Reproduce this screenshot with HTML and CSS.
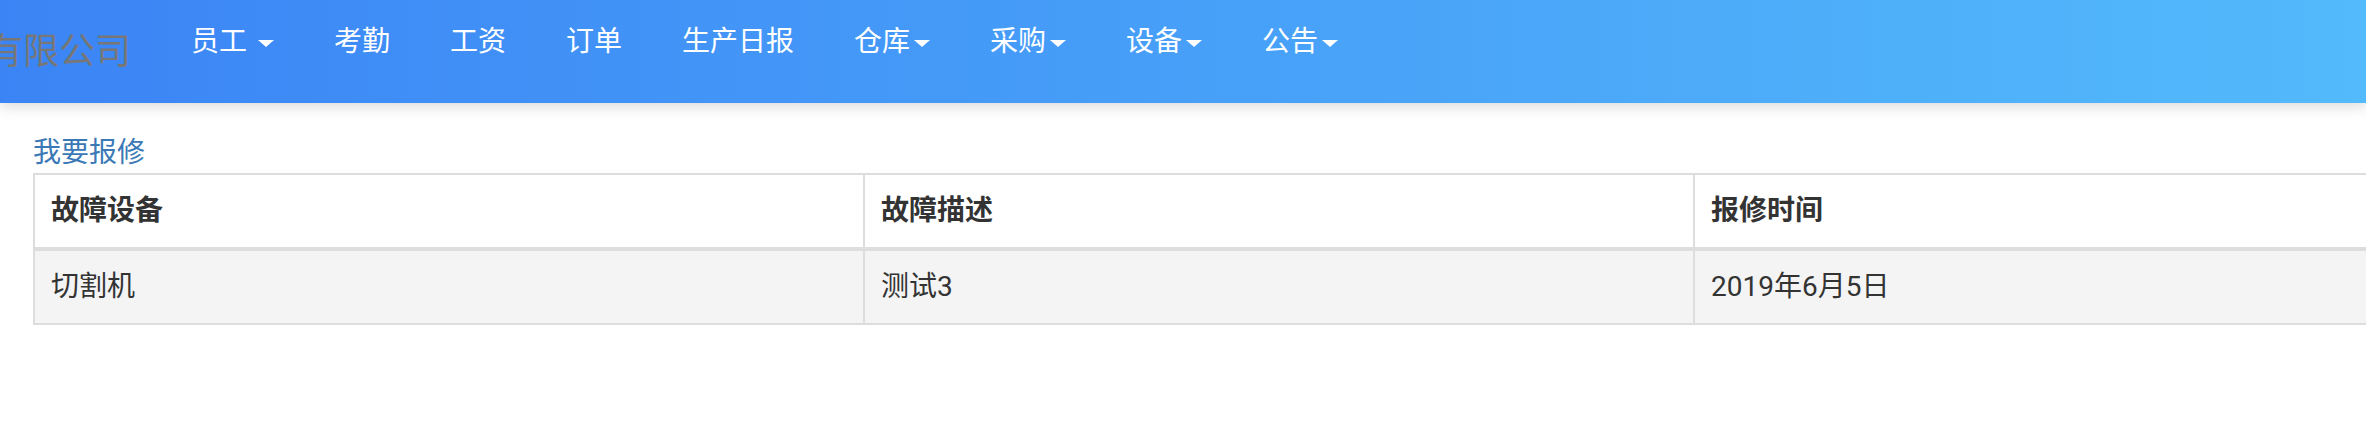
FILE: index.html
```html
<!DOCTYPE html>
<html lang="zh-CN">
<head>
<meta charset="utf-8">
<title>我要报修</title>
<link rel="stylesheet" href="styles.css">
</head>
<body>
<header class="navbar">
  <div class="brand">有限公司</div>
  <ul class="nav">
    <li class="nav-item">员工 <span class="caret"></span></li>
    <li class="nav-item">考勤</li>
    <li class="nav-item">工资</li>
    <li class="nav-item">订单</li>
    <li class="nav-item">生产日报</li>
    <li class="nav-item">仓库<span class="caret"></span></li>
    <li class="nav-item">采购<span class="caret"></span></li>
    <li class="nav-item">设备<span class="caret"></span></li>
    <li class="nav-item">公告<span class="caret"></span></li>
  </ul>
</header>
<main class="content">
  <a class="report-link" href="#">我要报修</a>
  <table class="repair-table">
    <colgroup>
      <col class="col">
      <col class="col">
      <col class="col">
    </colgroup>
    <thead>
      <tr>
        <th>故障设备</th>
        <th>故障描述</th>
        <th>报修时间</th>
      </tr>
    </thead>
    <tbody>
      <tr>
        <td>切割机</td>
        <td>测试3</td>
        <td>2019年6月5日</td>
      </tr>
    </tbody>
  </table>
</main>
</body>
</html>
```

FILE: styles.css
```css
html, body {
  margin: 0;
  padding: 0;
  overflow: hidden;
  background: #fff;
}

body {
  font-family: "Roboto", "Noto Sans CJK SC", sans-serif;
  color: #333;
  width: 2366px;
  height: 434px;
}

.navbar {
  display: flex;
  align-items: flex-start;
  height: 103px;
  background: linear-gradient(to right, #3b84f5, #53bafb);
  box-shadow: 0 3px 14px rgba(0, 0, 0, 0.16);
  position: relative;
  z-index: 1;
}

.brand {
  margin-left: -13px;
  padding-top: 27px;
  font-size: 36px;
  line-height: 50px;
  color: #777;
  white-space: nowrap;
}

.nav {
  display: flex;
  list-style: none;
  margin: 0 0 0 30px;
  padding: 22px 0 0 0;
}

.nav-item {
  padding: 0 30px;
  font-size: 28px;
  line-height: 40px;
  color: #fff;
  white-space: nowrap;
}

.caret {
  display: inline-block;
  width: 0;
  height: 0;
  margin-left: 4px;
  vertical-align: middle;
  border-top: 7px solid #fff;
  border-left: 8px solid transparent;
  border-right: 8px solid transparent;
}

.content {
  padding: 30px 0 0 33px;
}

.report-link {
  display: block;
  font-size: 28px;
  line-height: 40px;
  color: #3a78b6;
  text-decoration: none;
}

.repair-table {
  border-collapse: collapse;
  table-layout: fixed;
  width: 2492px;
  font-size: 28px;
  line-height: 40px;
}

.repair-table .col {
  width: 830px;
}

.repair-table th,
.repair-table td {
  border: 2px solid #ddd;
  padding: 16px;
  text-align: left;
  vertical-align: top;
}

.repair-table th {
  font-weight: bold;
  background: #fff;
  border-bottom-width: 4px;
}

.repair-table tbody tr {
  background: #f4f4f4;
}
```
